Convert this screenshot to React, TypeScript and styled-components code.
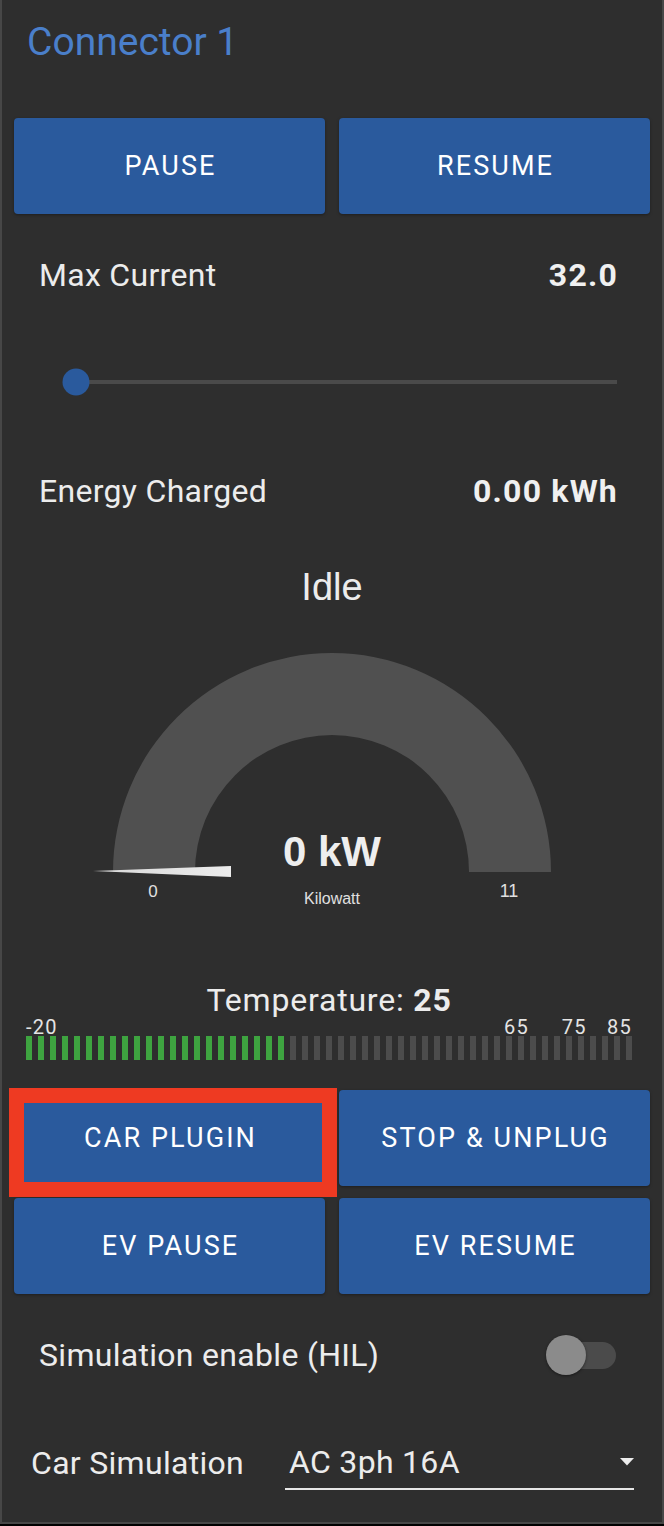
import React from "react";
import styled, { createGlobalStyle } from "styled-components";

const Global = createGlobalStyle`
  html, body { margin: 0; padding: 0; background: #000; }
  body { font-family: Roboto, "Noto Sans", sans-serif; }
`;

const Card = styled.div`
  width: 664px;
  height: 1524px;
  box-sizing: border-box;
  background: #2e2e2e;
  border: 2px solid #474747;
  border-top: none;
  display: flex;
  flex-direction: column;
  color: #ececec;
  font-family: Roboto, "Noto Sans", sans-serif;
`;

const Header = styled.div`
  height: 118px;
  box-sizing: border-box;
  padding: 20px 0 0 25px;
`;

const Title = styled.h1`
  margin: 0;
  font-size: 39px;
  line-height: 44px;
  font-weight: 400;
  color: #4a7fca;
`;

const ButtonGrid = styled.div<{ $mt?: number }>`
  display: grid;
  grid-template-columns: 1fr 1fr;
  column-gap: 14px;
  row-gap: 12px;
  padding: 0 12px;
  margin-top: ${(p) => p.$mt ?? 0}px;
`;

const ActionButton = styled.button<{ $highlight?: boolean }>`
  position: relative;
  height: 96px;
  border: none;
  border-radius: 4px;
  background: #2a5a9d;
  color: #fff;
  font-family: Roboto, "Noto Sans", sans-serif;
  font-size: 27px;
  letter-spacing: 2.1px;
  font-weight: 400;
  text-transform: uppercase;
  padding: 0 0 0 2px;
  box-shadow: 0 1px 3px rgba(0, 0, 0, 0.35);
  &::after {
    content: "";
    display: ${(p) => (p.$highlight ? "block" : "none")};
    position: absolute;
    left: -5px;
    right: -12px;
    top: -2px;
    bottom: -11px;
    border: 15px solid #ee3a22;
    pointer-events: none;
  }
`;

const SettingRow = styled.div<{ $mt: number; $pl?: number; $pr?: number; $h?: number }>`
  display: flex;
  align-items: center;
  justify-content: space-between;
  height: ${(p) => p.$h ?? 60}px;
  margin-top: ${(p) => p.$mt}px;
  padding: 0 ${(p) => p.$pr ?? 45}px 0 ${(p) => p.$pl ?? 37}px;
`;

const Label = styled.span<{ $w?: number }>`
  font-size: 32px;
  line-height: 36px;
  letter-spacing: 0.3px;
  color: #ececec;
  ${(p) => (p.$w ? `width: ${p.$w}px; flex: none;` : "")}
`;

const Value = styled.span`
  font-size: 32px;
  line-height: 36px;
  letter-spacing: 1.2px;
  margin-right: -1px;
  font-weight: 700;
  color: #f0f0f0;
`;

const SliderBox = styled.div`
  position: relative;
  height: 40px;
  margin: 57px 45px 0 74px;
  display: flex;
  align-items: center;
`;

const Track = styled.div`
  flex: 1;
  height: 4px;
  background: #4a4a4a;
`;

const Thumb = styled.div`
  position: absolute;
  top: 50%;
  width: 27px;
  height: 27px;
  border-radius: 50%;
  background: #2a5a9d;
  transform: translate(-50%, -50%);
`;

const GaugeTitle = styled.div`
  margin-top: 44px;
  text-align: center;
  font-family: "Liberation Sans", Arial, sans-serif;
  font-size: 38px;
  line-height: 44px;
  color: #ececec;
`;

const GaugeSvg = styled.svg`
  display: block;
  width: 660px;
  height: 320px;
`;

const TempTitle = styled.div`
  margin-top: 54px;
  text-align: center;
  font-size: 32px;
  line-height: 34px;
  letter-spacing: 0.8px;
  color: #ececec;
  padding-right: 6px;
  b {
    font-weight: 700;
  }
`;

const Scale = styled.div`
  position: relative;
  height: 18px;
  margin: 0 30px 0 24px;
`;

const ScaleLabel = styled.span`
  position: absolute;
  top: 1px;
  font-size: 20px;
  line-height: 18px;
  letter-spacing: 1.2px;
  color: #e4e4e4;
  white-space: nowrap;
`;

const Bars = styled.div`
  display: flex;
  gap: 6px;
  height: 24px;
  margin: 1px 0 0 24px;
`;

const Bar = styled.div<{ $on: boolean }>`
  width: 6px;
  flex: none;
  background: ${(p) => (p.$on ? "#3ea440" : "#4c4c4c")};
`;

const ToggleTrack = styled.div`
  position: relative;
  width: 53px;
  height: 27px;
  border-radius: 14px;
  background: #4b4b4b;
`;

const ToggleThumb = styled.div`
  position: absolute;
  left: -17px;
  top: 50%;
  width: 40px;
  height: 40px;
  border-radius: 50%;
  background: #8b8b8b;
  transform: translateY(-50%);
  box-shadow: 0 1px 3px rgba(0, 0, 0, 0.45);
`;

const Select = styled.div`
  flex: 1;
  align-self: stretch;
  box-sizing: border-box;
  display: flex;
  align-items: center;
  justify-content: space-between;
  padding-left: 4px;
  border-bottom: 2px solid #e6e6e6;
  font-size: 32px;
  letter-spacing: 0.3px;
  color: #ececec;
`;

const SCALE_MIN = -20;
const SCALE_MAX = 85;
const TEMP = 25;
const BAR_COUNT = 51;
const scaleMarks = [-20, 65, 75, 85];

export default function App() {
  const bars = Array.from({ length: BAR_COUNT }, (_, i) => {
    const v = SCALE_MIN + ((i * 12 + 3) / 606) * (SCALE_MAX - SCALE_MIN);
    return v <= TEMP;
  });

  return (
    <>
      <Global />
      <Card>
        <Header>
          <Title>Connector 1</Title>
        </Header>

        <ButtonGrid>
          <ActionButton>Pause</ActionButton>
          <ActionButton>Resume</ActionButton>
        </ButtonGrid>

        <SettingRow $mt={31}>
          <Label>Max Current</Label>
          <Value>32.0</Value>
        </SettingRow>

        <SliderBox>
          <Track />
          <Thumb style={{ left: "0%" }} />
        </SliderBox>

        <SettingRow $mt={59}>
          <Label>Energy Charged</Label>
          <Value>0.00 kWh</Value>
        </SettingRow>

        <GaugeTitle>Idle</GaugeTitle>
        <GaugeSvg viewBox="0 0 660 320">
          <defs>
            <linearGradient id="needle" x1="0" y1="0" x2="1" y2="0">
              <stop offset="0" stopColor="#d8d8d8" />
              <stop offset="1" stopColor="#ececec" />
            </linearGradient>
          </defs>
          <path
            d="M 111 263 A 219 219 0 0 1 549 263 L 467 263 A 137 137 0 0 0 193 263 Z"
            fill="#505050"
          />
          <polygon points="91,262 229,257 229,268" fill="url(#needle)" />
          <text
            x="330"
            y="257"
            textAnchor="middle"
            fontFamily="'Liberation Sans', Arial, sans-serif"
            fontWeight="700"
            fontSize="42"
            fill="#eeeeee"
          >
            0 kW
          </text>
          <text
            x="151"
            y="288"
            textAnchor="middle"
            fontFamily="'Liberation Sans', Arial, sans-serif"
            fontSize="17"
            fill="#e0e0e0"
          >
            0
          </text>
          <text
            x="330"
            y="295"
            textAnchor="middle"
            fontFamily="'Liberation Sans', Arial, sans-serif"
            fontSize="16"
            fill="#e0e0e0"
          >
            Kilowatt
          </text>
          <text
            x="507"
            y="288"
            textAnchor="middle"
            fontFamily="'Liberation Sans', Arial, sans-serif"
            fontSize="18"
            fill="#e0e0e0"
          >
            11
          </text>
        </GaugeSvg>

        <TempTitle>
          Temperature: <b>{TEMP}</b>
        </TempTitle>
        <Scale>
          {scaleMarks.map((m, i) => {
            const pct = ((m - SCALE_MIN) / (SCALE_MAX - SCALE_MIN)) * 100;
            const shift = i === 0 ? "0" : i === scaleMarks.length - 1 ? "-100%" : "-50%";
            return (
              <ScaleLabel key={m} style={{ left: `${pct}%`, transform: `translateX(${shift})` }}>
                {m}
              </ScaleLabel>
            );
          })}
        </Scale>
        <Bars>
          {bars.map((on, i) => (
            <Bar key={i} $on={on} />
          ))}
        </Bars>

        <ButtonGrid $mt={30}>
          <ActionButton $highlight>Car Plugin</ActionButton>
          <ActionButton>Stop &amp; Unplug</ActionButton>
          <ActionButton>EV Pause</ActionButton>
          <ActionButton>EV Resume</ActionButton>
        </ButtonGrid>

        <SettingRow $mt={31} $pr={46}>
          <Label>Simulation enable (HIL)</Label>
          <ToggleTrack>
            <ToggleThumb />
          </ToggleTrack>
        </SettingRow>

        <SettingRow $mt={51} $pl={29} $pr={28} $h={54}>
          <Label $w={254}>Car Simulation</Label>
          <Select>
            <span>AC 3ph 16A</span>
            <svg width="14" height="8" viewBox="0 0 14 8">
              <path d="M0 0 L14 0 L7 7.5 Z" fill="#ececec" />
            </svg>
          </Select>
        </SettingRow>
      </Card>
    </>
  );
}
